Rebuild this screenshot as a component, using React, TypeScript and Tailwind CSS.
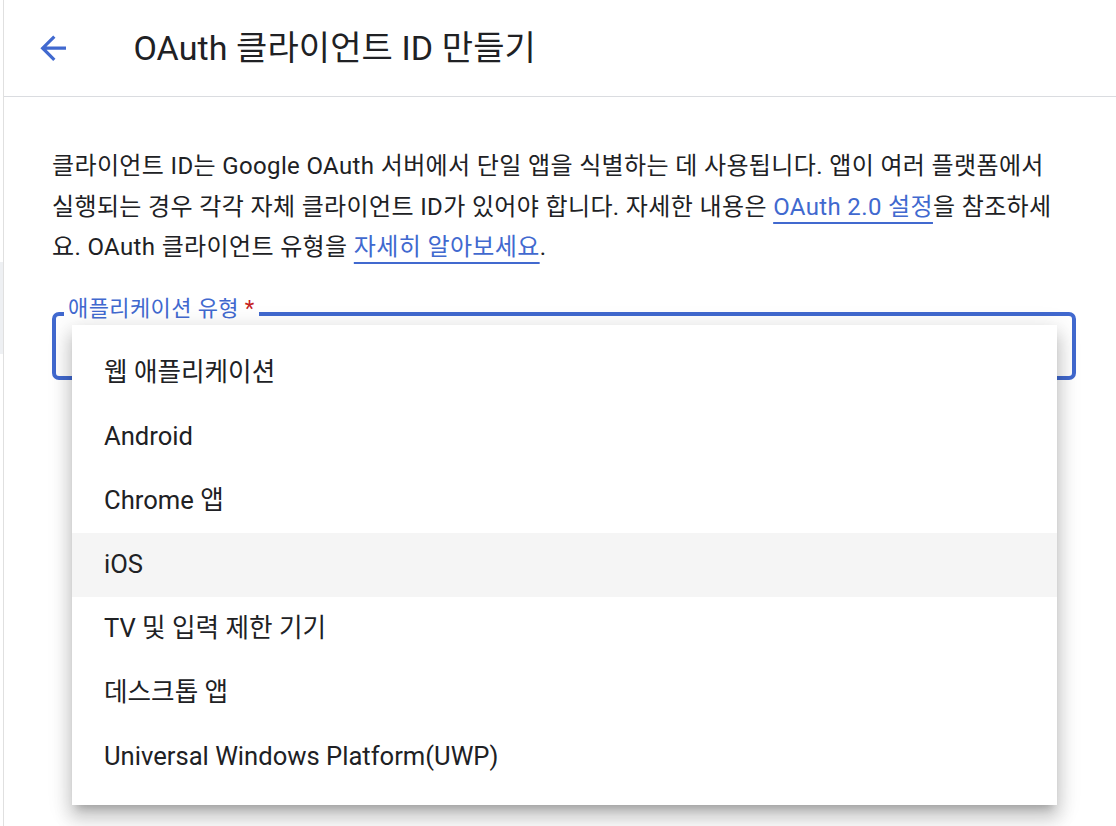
import React from "react";

const FONT = 'Roboto, "Noto Sans CJK KR", "Liberation Sans", sans-serif';

const options = [
  "웹 애플리케이션",
  "Android",
  "Chrome 앱",
  "iOS",
  "TV 및 입력 제한 기기",
  "데스크톱 앱",
  "Universal Windows Platform(UWP)",
];

function BackArrow() {
  return (
    <svg width="38.4" height="38.4" viewBox="0 0 24 24" className="fill-[#4169cf]">
      <path d="M20 11H7.83l5.59-5.59L12 4l-8 8 8 8 1.41-1.41L7.83 13H20v-2z" />
    </svg>
  );
}

function TypeSelect() {
  return (
    <div className="relative mt-[44px]">
      <div className="h-[68px] rounded-[7px] border-[4px] border-[#4169cf]" />
      <span className="absolute -top-[17px] left-[12px] bg-white px-[4px] text-[22px] leading-[28px] tracking-[0.4px] text-[#4169cf]">
        애플리케이션 유형 <span className="text-[#c5221f]">*</span>
      </span>
      <ul className="absolute left-[20px] top-[13px] w-[985px] bg-white py-[16px] shadow-[0_8px_8px_-5px_rgba(0,0,0,0.2),0_13px_16px_2px_rgba(0,0,0,0.14),0_5px_22px_3px_rgba(0,0,0,0.12)]">
        {options.map((o) => (
          <li
            key={o}
            className={
              "flex h-[64px] items-center px-[32px] text-[25.6px] text-[#202124] " +
              (o === "iOS" ? "bg-[#f5f5f5]" : "")
            }
          >
            {o}
          </li>
        ))}
      </ul>
    </div>
  );
}

export default function App() {
  return (
    <div className="flex h-[826px] w-full overflow-hidden bg-white" style={{ fontFamily: FONT }}>
      <div className="w-[3px] shrink-0">
        <div className="mt-[262px] h-[92px] bg-[#eef0f3]" />
      </div>
      <div className="flex-1 border-l border-[#e0e0e0]">
        <header className="flex h-[97px] items-center border-b border-[#dadce0] pl-[30px]">
          <BackArrow />
          <h1 className="ml-[61px] text-[34px] font-normal tracking-[0.1px] text-[#202124]">OAuth 클라이언트 ID 만들기</h1>
        </header>
        <main className="pl-[48px] pr-[40px] pt-[49px]">
          <p className="whitespace-nowrap text-[24px] leading-[40.5px] tracking-[0.36px] text-[#202124]">
            클라이언트 ID는 Google OAuth 서버에서 단일 앱을 식별하는 데 사용됩니다. 앱이 여러 플랫폼에서
            <br />
            실행되는 경우 각각 자체 클라이언트 ID가 있어야 합니다. 자세한 내용은{" "}
            <a className="text-[#4169cf] underline decoration-2 underline-offset-[7px]">OAuth 2.0 설정</a>을 참조하세
            <br />
            요. OAuth 클라이언트 유형을{" "}
            <a className="text-[#4169cf] underline decoration-2 underline-offset-[7px]">자세히 알아보세요</a>.
          </p>
          <TypeSelect />
        </main>
      </div>
    </div>
  );
}
